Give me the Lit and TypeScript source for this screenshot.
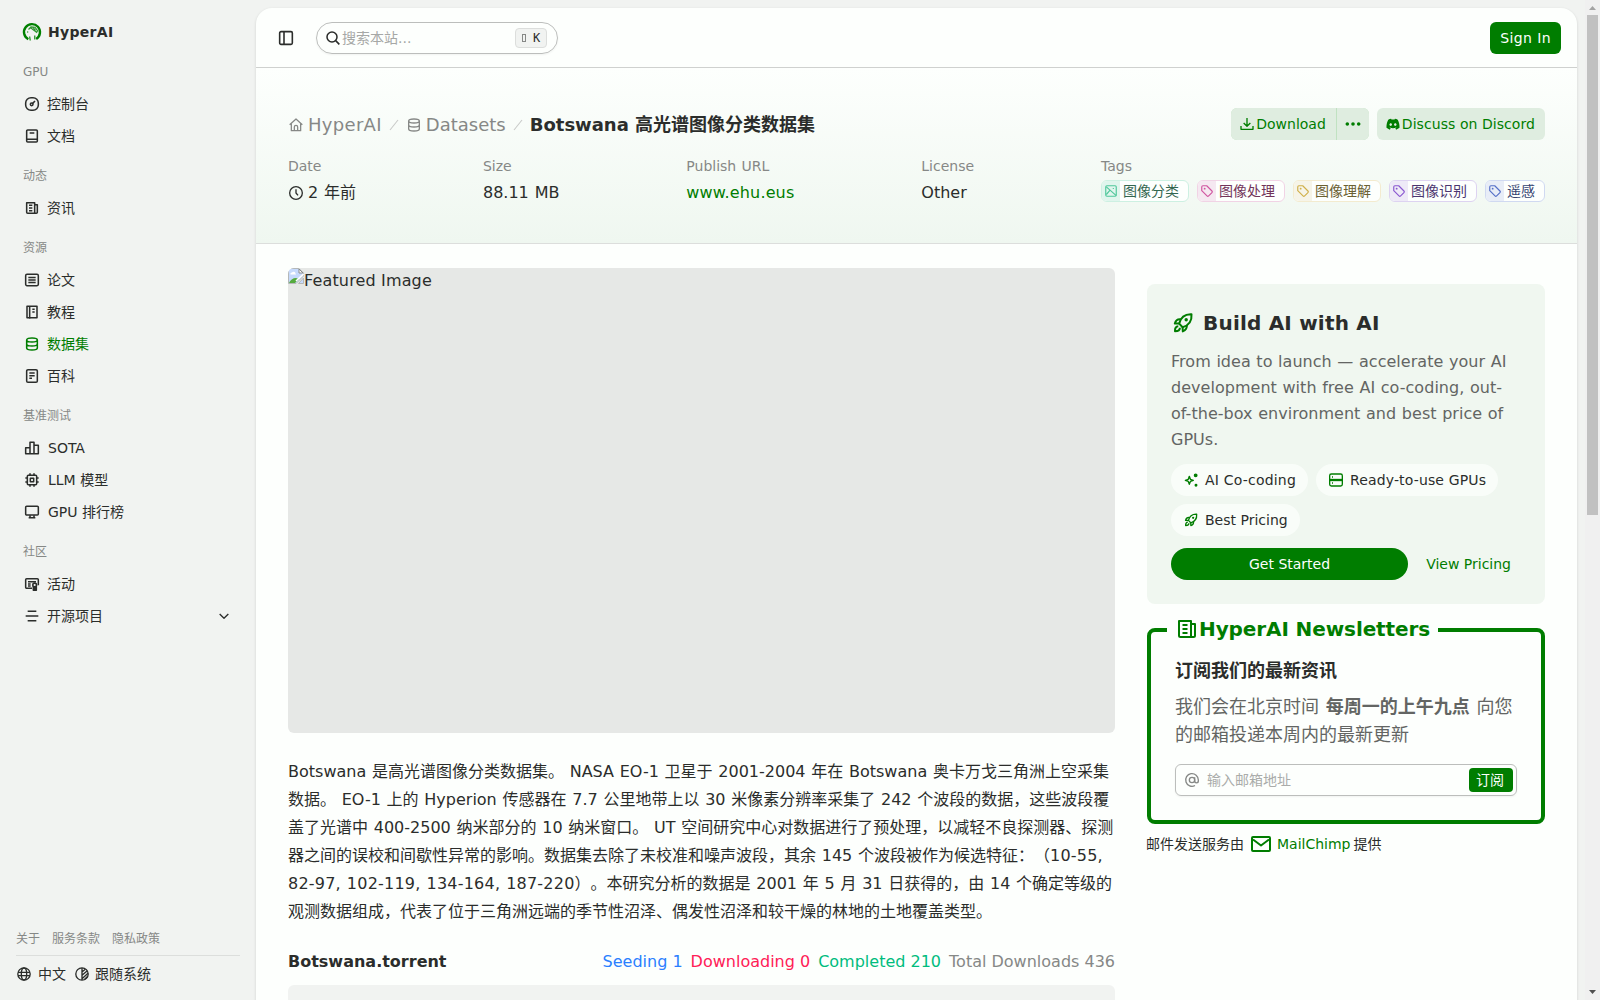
import { LitElement, html, css, svg, nothing } from "lit";
import { customElement } from "lit/decorators.js";
import { classMap } from "lit/directives/class-map.js";

const rocket = svg`<path d="M8.200 12.600C9.600 6.800 13.600 3 20.500 3.300C21 9.800 17.600 14.400 11.600 16.200z"/><path d="M9.800 8.400C6.600 7.900 4.800 9.300 3.800 12.500l4.400.100M15.800 14.200C16.200 17.200 14.700 19.200 11.800 20.400l-.200-4.200"/><path d="M7.300 15.300C5 15.400 3.800 17.200 4 20.300c3 0 4.900-1.200 4.900-3.500"/><circle cx="15.200" cy="8.700" r="1.700" fill="currentColor" stroke="none"/>`;
const tag = svg`<path d="M3 5v6.500l9 9a2 2 0 0 0 2.800 0l5.700-5.700a2 2 0 0 0 0-2.800l-9-9H5a2 2 0 0 0-2 2z"/><circle cx="8" cy="8" r="1.600" fill="currentColor" stroke="none"/>`;
const news = svg`<path d="M4 4h12v16H5.500A1.500 1.500 0 0 1 4 18.500zM16 7h4v11.500a1.500 1.500 0 0 1-1.500 1.500H16M7.500 8h5M7.500 12h5M7.500 16h5"/>`;
const database = svg`<path d="M4 6c0-1.700 3.600-3 8-3s8 1.300 8 3-3.600 3-8 3-8-1.300-8-3zM4 6v12c0 1.700 3.600 3 8 3s8-1.300 8-3V6M4 12c0 1.700 3.600 3 8 3s8-1.300 8-3"/>`;

const ICONS: Record<string, unknown> = {
  rocket,
  tag,
  news,
  database,
  gauge: svg`<rect x="2.500" y="2.500" width="19" height="19" rx="8"/><circle cx="11.500" cy="12.500" r="2"/><path d="M13 11l3.500-3.500"/>`,
  book: svg`<rect x="4" y="3" width="16" height="18" rx="1.500"/><path d="M4 17h16M8.500 7.500h7"/>`,
  paper: svg`<rect x="2.500" y="3.500" width="19" height="17" rx="2"/><path d="M6.500 8.300h11M6.500 12h11M6.500 15.700h11"/>`,
  tutorial: svg`<path d="M4.500 3.500h15v17h-15zM8.500 3.500v18.500M12.500 8h3.500M12.500 12h3.500"/>`,
  wiki: svg`<rect x="4" y="2.500" width="16" height="19" rx="2"/><path d="M8 7.500h8M8 11.500h8M8 15.500h4"/>`,
  bars: svg`<path d="M2.500 11.500h6.500v9H2.500zM9 3.500h6v17H9zM15 8h6.500v12.500H15z"/>`,
  chip: svg`<rect x="5" y="5" width="14" height="14" rx="1.500"/><rect x="9.500" y="9.500" width="5" height="5"/><path d="M9 2v3M15 2v3M9 19v3M15 19v3M2 9h3M2 15h3M19 9h3M19 15h3"/>`,
  screen: svg`<rect x="2.500" y="3.500" width="19" height="13" rx="1.500"/><path d="M9 17v3.500M15 17v3.500M7 20.500h10"/>`,
  activity: svg`<path d="M12 18.500H4a1.500 1.500 0 0 1-1.500-1.500V5.500A1.500 1.500 0 0 1 4 4h16a1.500 1.500 0 0 1 1.500 1.500V14M6 8.500h12M6 12h4M6 15h4"/><circle cx="16" cy="13.500" r="2.800"/><path d="M14 16v5.500h4.500V16z" fill="currentColor"/>`,
  lines: svg`<path d="M5.500 5h13M2.500 12h19M5.500 19h13"/>`,
  chevron: svg`<path d="M5.500 9l6.500 6.500L18.500 9"/>`,
  globe: svg`<circle cx="12" cy="12" r="9.300"/><path d="M3 9.500h18M3 14.500h18"/><ellipse cx="12" cy="12" rx="4" ry="9"/>`,
  contrast: svg`<circle cx="12" cy="12" r="9.300"/><path d="M12 3v18M12 9l5-4M12 14l8-7M12 19l9-8M16 20l4-4"/>`,
  panel: svg`<rect x="2.500" y="2.500" width="19" height="19" rx="2"/><path d="M9 3v18"/>`,
  search: svg`<circle cx="10.500" cy="10.500" r="7.500"/><path d="M16 16l5.500 5.500"/>`,
  home: svg`<path d="M2.500 11.500L12 3l9.500 8.500M5 10v10.500h14V10M9.500 20v-5a2.500 2.500 0 0 1 5 0v5"/>`,
  clock: svg`<circle cx="12" cy="12" r="9.500"/><path d="M12 6.500V12l3 3.500"/>`,
  slash: svg`<path d="M18 4.500L6 19.500"/>`,
  download: svg`<path d="M3 15v5h18v-5M12 3v12M7 10.500l5 5 5-5"/>`,
  picture: svg`<rect x="3" y="3" width="18" height="18" rx="2"/><path d="M4 5l17 15M10 11l-6 7M16 7v1.500"/>`,
  spark: svg`<path d="M9.500 6.500l1.600 4.400 4.400 1.600-4.400 1.600-1.600 4.400-1.600-4.400-4.400-1.600 4.400-1.600z"/><circle cx="19" cy="5" r="1.900" fill="currentColor"/><circle cx="19.500" cy="20" r="1.200" fill="currentColor"/>`,
  server: svg`<rect x="2.500" y="3" width="19" height="18" rx="2.500"/><path d="M2.500 12h19" stroke-width="3.500"/><path d="M6 7.500h1.500M6 16.500h1.500"/>`,
  mail: svg`<rect x="3" y="5" width="18" height="14" rx="1"/><path d="M4 7.500l8 6 8-6"/>`,
  at: svg`<circle cx="12" cy="12" r="4"/><path d="M16 8v5.500a2.700 2.700 0 0 0 5.500 0V12A9.500 9.500 0 1 0 16.500 20.300"/>`,
};

const icon = (name: string, size: number, stroke = 2) => html`<svg
  class="icon" width=${size} height=${size} viewBox="0 0 24 24" fill="none"
  stroke="currentColor" stroke-width=${stroke} stroke-linejoin="round">${ICONS[name]}</svg>`;

interface Item { label: string; icon: string; active?: boolean; more?: boolean }
const NAV: { title: string; items: Item[] }[] = [
  { title: "GPU", items: [{ label: "控制台", icon: "gauge" }, { label: "文档", icon: "book" }] },
  { title: "动态", items: [{ label: "资讯", icon: "news" }] },
  { title: "资源", items: [
    { label: "论文", icon: "paper" }, { label: "教程", icon: "tutorial" },
    { label: "数据集", icon: "database", active: true }, { label: "百科", icon: "wiki" } ] },
  { title: "基准测试", items: [
    { label: "SOTA", icon: "bars" }, { label: "LLM 模型", icon: "chip" }, { label: "GPU 排行榜", icon: "screen" } ] },
  { title: "社区", items: [{ label: "活动", icon: "activity" }, { label: "开源项目", icon: "lines", more: true }] },
];

const isLatin = (s: string) => /^[A-Z]/.test(s);

const TAGS = [
  { label: "图像分类", icon: "picture", tone: "teal" },
  { label: "图像处理", icon: "tag", tone: "pink" },
  { label: "图像理解", icon: "tag", tone: "gold" },
  { label: "图像识别", icon: "tag", tone: "violet" },
  { label: "遥感", icon: "tag", tone: "blue" },
];

const LINES = [
  html`Botswana 是高光谱图像分类数据集。 NASA EO-1 卫星于 2001-2004 年在 Botswana 奥卡万戈三角洲上空采集`,
  html`数据。 EO-1 上的 Hyperion 传感器在 7.7 公里地带上以 30 米像素分辨率采集了 242 个波段的数据，这些波段覆`,
  html`盖了光谱中 400-2500 纳米部分的 10 纳米窗口。 UT 空间研究中心对数据进行了预处理，以减轻不良探测器、探测`,
  html`器之间的误校和间歇性异常的影响。数据集去除了未校准和噪声波段，其余 145 个波段被作为候选特征：（<span class="ranges">10-55,</span>`,
  html`<span class="ranges">82-97, 102-119, 134-164, 187-220</span>）。本研究分析的数据是 2001 年 5 月 31 日获得的，由 14 个确定等级的`,
  html`观测数据组成，代表了位于三角洲远端的季节性沼泽、偶发性沼泽和较干燥的林地的土地覆盖类型。`,
];

const FONT = css`Verdana, "DejaVu Sans", "Noto Sans CJK SC", sans-serif`;

@customElement("side-nav")
class SideNav extends LitElement {
  static styles = css`
    :host { display: flex; flex-direction: column; width: 256px; height: 1000px; box-sizing: border-box; padding: 16px 16px 8px; color: #2b2d2b; font: 14px/32px ${FONT}; white-space: nowrap; }
    .icon { flex: none; display: block; }
    .brand { display: flex; align-items: center; height: 32px; padding-left: 6px; gap: 6px; font-weight: 700; letter-spacing: 0.3px; }
    .group { margin-top: 8px; }
    .title { padding-left: 7px; font-size: 12px; color: #868886; height: 32px; }
    .item { display: flex; align-items: center; gap: 7px; padding: 0 8px; height: 32px; }
    .item.latin { gap: 8px; }
    .item.active { color: #007d00; }
    .grow { flex: 1; }
    .links { margin: auto 0 0; display: flex; gap: 12px; font-size: 12px; line-height: 32px; color: #868886; border-bottom: 1px solid #dcdedc; }
    .prefs { display: flex; align-items: center; height: 36px; }
    .prefs span { margin: 0 8px 0 6px; }
    .prefs span:last-child { margin-left: 5px; }
  `;
  render() {
    return html`
      <div class="brand">
        <svg class="icon" width="20" height="20" viewBox="0 0 20 20" fill="none" stroke="#008000">
          <path d="M6.300 17.200A8 8 0 1 1 14.200 16.900" stroke-width="2.400"/>
          <path d="M8.200 18.500L7.700 14.500M12.800 17.500V13.500" stroke-width="1.100"/>
          <path d="M6.500 7.500L9 4.800l4 .400 2.600 3.600-1 1.500-2.200-1.800-2-1.300M8.300 5.600l4.500 3.300M10.500 4.800l3 3.500" stroke-width="1.200" stroke-opacity=".8"/>
          <path d="M5.600 9.500v1" stroke-width="1.300"/>
        </svg><span>HyperAI</span>
      </div>
      ${NAV.map((g) => html`<div class="group"><div class="title">${g.title}</div>
        ${g.items.map((i) => html`<div class=${classMap({ item: true, active: !!i.active, latin: isLatin(i.label) })}>
          ${icon(i.icon, 16, 2.3)}<span class="grow">${i.label}</span>${i.more ? icon("chevron", 16) : nothing}</div>`)}
      </div>`)}
      <div class="links"><span>关于</span><span>服务条款</span><span>隐私政策</span></div>
      <div class="prefs">${icon("globe", 16)}<span>中文</span>${icon("contrast", 16)}<span>跟随系统</span></div>
    `;
  }
}

@customElement("page-hero")
class PageHero extends LitElement {
  static styles = css`
    :host { display: block; box-sizing: border-box; height: 176px; padding: 40px 32px 0; border-bottom: 1px solid #dcdedc; background: linear-gradient(#fdfffd, #eff7f0); }
    .icon { flex: none; display: block; }
    .row, .crumbs, .actions, .tags, .value, .btn { display: flex; align-items: center; }
    .row { justify-content: space-between; height: 32px; }
    .crumbs { font-size: 18px; line-height: 32px; color: #868886; gap: 4px; padding-top: 2px; }
    .site { letter-spacing: 0.3px; }
    .sep { color: #c8cac8; display: block; }
    .crumbs b { color: #2b2d2b; }
    .actions { gap: 8px; color: #007d00; }
    .btn { background: #dfede0; height: 32px; border-radius: 6px; box-sizing: border-box; padding: 0 10px 0 8px; }
    .btn .icon { margin-right: 1px; }
    .discord { letter-spacing: 0.06px; }
    .split { display: flex; gap: 1px; background: #c0e2c1; border-radius: 6px; }
    .left { border-radius: 6px 0 0 6px; }
    .more { border-radius: 0 6px 6px 0; padding: 0 7px 0 8px; }
    .meta { display: flex; justify-content: space-between; margin-top: 14px; word-spacing: 0.8px; }
    .label { color: #868886; line-height: 24px; margin-bottom: 1px; }
    .value { font-size: 16px; height: 28px; gap: 4px; }
    .link { color: #007d00; letter-spacing: 0.15px; }
    .tags { gap: 8px; height: 24px; }
    .tag { display: flex; border: 1px solid; border-radius: 6px; height: 22px; box-sizing: border-box; overflow: hidden; background: #fdfffd; line-height: 20px; }
    .tag i { display: flex; align-items: center; justify-content: center; width: 18px; }
    .tag span { padding: 0 9px 0 3px; }
    .teal { border-color: #cdf0e2; color: #33664f; } .teal i { background: #e0f5ed; color: #4fc79b; }
    .pink { border-color: #f1d3e5; color: #72345a; } .pink i { background: #f5e8f1; color: #d055a0; }
    .gold { border-color: #f3ebcf; color: #6b6032; } .gold i { background: #f6f4e8; color: #d0b04a; }
    .violet { border-color: #ddd3f1; color: #4b3570; } .violet i { background: #eeeaf7; color: #8a58d0; }
    .blue { border-color: #d0d9f1; color: #344370; } .blue i { background: #e8edf7; color: #5570c8; }
  `;
  render() {
    return html`
      <div class="row">
        <div class="crumbs">${icon("home", 16, 1.9)}<span class="site">HyperAI</span><span class="sep">${icon("slash", 16, 1.6)}</span>${icon("database", 16, 2)}<span>Datasets</span><span class="sep">${icon("slash", 16, 1.6)}</span><b>Botswana 高光谱图像分类数据集</b></div>
        <div class="actions">
          <div class="split"><span class="btn left">${icon("download", 16)}<span>Download</span></span>
            <span class="btn more"><svg class="icon" width="16" height="16" viewBox="0 0 16 16" fill="currentColor"><circle cx="2.300" cy="8" r="1.800"/><circle cx="8" cy="8" r="1.800"/><circle cx="13.700" cy="8" r="1.800"/></svg></span></div>
          <span class="btn"><svg class="icon" width="16" height="16" viewBox="-2 -1.500 28 27" fill="currentColor"><path d="M20.300 4.400A19.800 19.800 0 0 0 15.400 2.900l-.600 1.300a18.300 18.300 0 0 0-5.500 0L8.700 2.900A19.700 19.700 0 0 0 3.700 4.400C1.200 9 .400 13.600.600 18.600a19.900 19.900 0 0 0 6 3.400l1.300-2.500c-.700-.300-1.300-.600-1.900-.900l.400-.300a14.200 14.200 0 0 0 11.200 0l.400.300c-.600.400-1.200.700-1.900.900l1.300 2.500a19.800 19.800 0 0 0 6-3.400c.300-5.200-.700-9.700-3.100-14.200zM8 15.300c-1.200 0-2.200-1.100-2.200-2.400s1-2.400 2.200-2.400 2.200 1.100 2.200 2.400-1 2.400-2.200 2.400zm8 0c-1.200 0-2.200-1.100-2.200-2.400s1-2.400 2.200-2.400 2.200 1.100 2.200 2.400-1 2.400-2.200 2.400z"/></svg><span class="discord">Discuss on Discord</span></span>
        </div>
      </div>
      <div class="meta">
        <div><div class="label">Date</div><div class="value">${icon("clock", 16)}<span>2 年前</span></div></div>
        <div><div class="label">Size</div><div class="value">88.11 MB</div></div>
        <div><div class="label">Publish URL</div><div class="value link">www.ehu.eus</div></div>
        <div><div class="label">License</div><div class="value">Other</div></div>
        <div><div class="label">Tags</div><div class="tags">${TAGS.map((t) => html`<div class="tag ${t.tone}"><i>${icon(t.icon, 14)}</i><span>${t.label}</span></div>`)}</div></div>
      </div>
    `;
  }
}

@customElement("promo-card")
class PromoCard extends LitElement {
  static styles = css`
    :host { display: flex; flex-direction: column; box-sizing: border-box; height: 320px; padding: 24px; background: #f0f7f0; border-radius: 8px; }
    .icon { flex: none; display: block; color: #007d00; }
    .title { display: flex; align-items: center; gap: 8px; font-size: 20px; font-weight: 700; line-height: 30px; letter-spacing: 0.2px; }
    .text { font-size: 16px; line-height: 26px; color: #636563; margin-top: 11px; word-spacing: 0.5px; letter-spacing: 0.03px; }
    .pills { display: flex; flex-wrap: wrap; gap: 8px; margin-top: 11px; }
    .pill { display: flex; align-items: center; height: 32px; border-radius: 16px; background: #f9fdf9; padding: 0 12px; gap: 6px; }
    .wide { letter-spacing: 0.2px; }
    .slight { letter-spacing: 0.14px; }
    .cta { display: flex; gap: 8px; line-height: 32px; margin-top: 12px; }
    .go { flex: 1; text-align: center; background: #007d00; color: #fdfffd; border-radius: 16px; }
    .view { padding: 0 10px; color: #007d00; }
  `;
  render() {
    return html`
      <div class="title">${icon("rocket", 24)}<span>Build AI with AI</span></div>
      <div class="text">From idea to launch — accelerate your AI<br>development with free AI co-coding, out-<br>of-the-box environment and best price of<br>GPUs.</div>
      <div class="pills">
        <span class="pill">${icon("spark", 16)}<span class="wide">AI Co-coding</span></span>
        <span class="pill">${icon("server", 16)}<span class="slight">Ready-to-use GPUs</span></span>
        <span class="pill">${icon("rocket", 16)}<span>Best Pricing</span></span>
      </div>
      <div class="cta"><span class="go">Get Started</span><span class="view">View Pricing</span></div>
    `;
  }
}

@customElement("newsletter-box")
class NewsletterBox extends LitElement {
  static styles = css`
    :host { display: block; margin-top: 12px; }
    .icon { flex: none; display: block; }
    fieldset { margin: 0; border: 4px solid #007d00; border-radius: 8px; padding: 0 24px 24px; height: 208px; box-sizing: border-box; min-width: 0; }
    legend { display: flex; align-items: center; padding: 0 8px 2px; margin-left: -8px; font-size: 20px; font-weight: 700; line-height: 26px; color: #007d00; height: 28px; box-sizing: border-box; letter-spacing: -0.1px; }
    .head { font-size: 18px; font-weight: 700; line-height: 28px; margin-top: 13px; }
    .text { font-size: 18px; line-height: 28px; color: #636563; margin-top: 8px; word-spacing: 1px; }
    .field { display: flex; align-items: center; height: 32px; box-sizing: border-box; border: 1px solid #bcbebc; border-radius: 6px; margin-top: 15px; padding: 0 3px 0 8px; color: #868886; box-shadow: 0 1px 2px #0000000d; }
    .hint { flex: 1; color: #aaacaa; padding-left: 7px; }
    .send { background: #007d00; color: #fdfffd; border-radius: 4px; line-height: 24px; padding: 0 9px 0 7px; }
    .by { display: flex; align-items: center; height: 24px; margin: 8px 0 0 -1px; }
    .by a { color: #007d00; display: flex; align-items: center; gap: 4px; margin: 0 3px 0 5px; }
  `;
  render() {
    return html`
      <fieldset><legend>${icon("news", 24)}<span>HyperAI Newsletters</span></legend>
        <div class="head">订阅我们的最新资讯</div>
        <div class="text">我们会在北京时间 <b>每周一的上午九点</b> 向您<br>的邮箱投递本周内的最新更新</div>
        <div class="field">${icon("at", 16)}<span class="hint">输入邮箱地址</span><span class="send">订阅</span></div>
      </fieldset>
      <div class="by"><span>邮件发送服务由</span><a>${icon("mail", 24)}MailChimp</a><span>提供</span></div>
    `;
  }
}

@customElement("app-root")
class AppRoot extends LitElement {
  static styles = css`
    :host { display: flex; width: 1600px; height: 1000px; overflow: hidden; background: #f1f3f1; color: #2b2d2b; font: 14px/20px ${FONT}; white-space: nowrap; text-spacing-trim: space-all; }
    .icon { flex: none; display: block; }
    side-nav { flex: none; }
    .card { flex: none; width: 1321px; height: 1000px; margin-top: 8px; background: #fdfffd; border-radius: 16px 16px 0 0; overflow: hidden; box-shadow: 0 1px 3px #00000024; }
    .top { display: flex; align-items: center; height: 60px; box-sizing: border-box; padding: 0 16px 0 22px; border-bottom: 1px solid #cfd1cf; }
    .search { display: flex; align-items: center; width: 242px; height: 32px; box-sizing: border-box; border: 1px solid #bcbebc; border-radius: 16px; margin: 0 auto 0 22px; padding: 0 10px 0 8px; box-shadow: 0 1px 2px #0000000d; }
    .search .hint { flex: 1; color: #a6a8a6; padding-left: 1px; }
    .kbd { display: flex; align-items: center; gap: 7px; width: 32px; height: 20px; box-sizing: border-box; border: 1px solid #dcdedc; border-radius: 4px; background: #f1f3f1; padding-left: 6px; font: 12px/16px "DejaVu Sans Mono", monospace; }
    .key { width: 2px; height: 6px; border: 1px solid #868886; }
    .sign { background: #007d00; color: #fdfffd; border-radius: 6px; line-height: 32px; padding: 0 10px; letter-spacing: 0.4px; }
    .body { display: flex; gap: 32px; padding: 24px 32px; }
    .main { width: 827px; flex: none; }
    .aside { width: 398px; flex: none; padding-top: 16px; }
    .cover { display: flex; height: 465px; background: #e6e8e6; border-radius: 6px; font-size: 16px; line-height: 26px; overflow: hidden; letter-spacing: 0.15px; }
    .desc { font-size: 16px; line-height: 28px; margin-top: 25px; word-spacing: 0.65px; }
    .ranges { letter-spacing: 0.22px; }
    .torrent { display: flex; gap: 8px; font-size: 16px; line-height: 28px; margin-top: 22px; }
    .torrent b { margin-right: auto; }
    .seed { color: #2b7fff; } .down { color: #ff2056; } .done { color: #00bc7d; } .all { color: #868886; }
    .panel { height: 60px; border-radius: 6px; background: #f1f3f1; margin-top: 9px; }
    .gutter { flex: none; width: 15px; margin-left: auto; background: #f0f0f0; display: flex; flex-direction: column; align-items: center; }
    .gutter svg { display: block; }
    .thumb { width: 11px; height: 500px; background: #c1c1c1; margin-bottom: auto; }
  `;
  render() {
    return html`
      <side-nav></side-nav>
      <div class="card">
        <div class="top">${icon("panel", 16, 2.4)}
          <div class="search">${icon("search", 16, 2.3)}<span class="hint">搜索本站...</span><span class="kbd"><span class="key"></span>K</span></div>
          <span class="sign">Sign In</span></div>
        <page-hero></page-hero>
        <div class="body">
          <div class="main">
            <div class="cover"><svg width="16" height="16" viewBox="0 0 16 16"><path d="M.500.500h10.500l4.500 4.500v3L8 15.500H.500z" fill="#c6dafc" stroke="#b4b8b8"/><path d="M2.500 6.500a1.500 1.500 0 0 1 1.500-2 2 2 0 0 1 3.500 1l.500 1z" fill="#fff"/><path d="M1 15c1-3 4-5 7-5l3 1-4 4z" fill="#55ab3d"/><path d="M11 1v4h4z" fill="#fff" stroke="#8a8c8a"/><path d="M15.500 6L8 13" stroke="#fff" stroke-width="1.600"/><path d="M15.500 10v5.500h-5z" fill="#c6dafc" stroke="#b4b8b8"/></svg><span>Featured Image</span></div>
            <div class="desc">${LINES.map((l) => html`<div>${l}</div>`)}</div>
            <div class="torrent"><b>Botswana.torrent</b><span class="seed">Seeding 1</span><span class="down">Downloading 0</span><span class="done">Completed 210</span><span class="all">Total Downloads 436</span></div>
            <div class="panel"></div>
          </div>
          <div class="aside"><promo-card></promo-card><newsletter-box></newsletter-box></div>
        </div>
      </div>
      <div class="gutter"><svg width="15" height="15" viewBox="0 0 15 15"><path d="M4 10l3.500-4 3.500 4z" fill="#a3a3a3"/></svg><div class="thumb"></div><svg width="15" height="15" viewBox="0 0 15 15"><path d="M4 5l3.500 4 3.500-4z" fill="#505050"/></svg></div>
    `;
  }
}
